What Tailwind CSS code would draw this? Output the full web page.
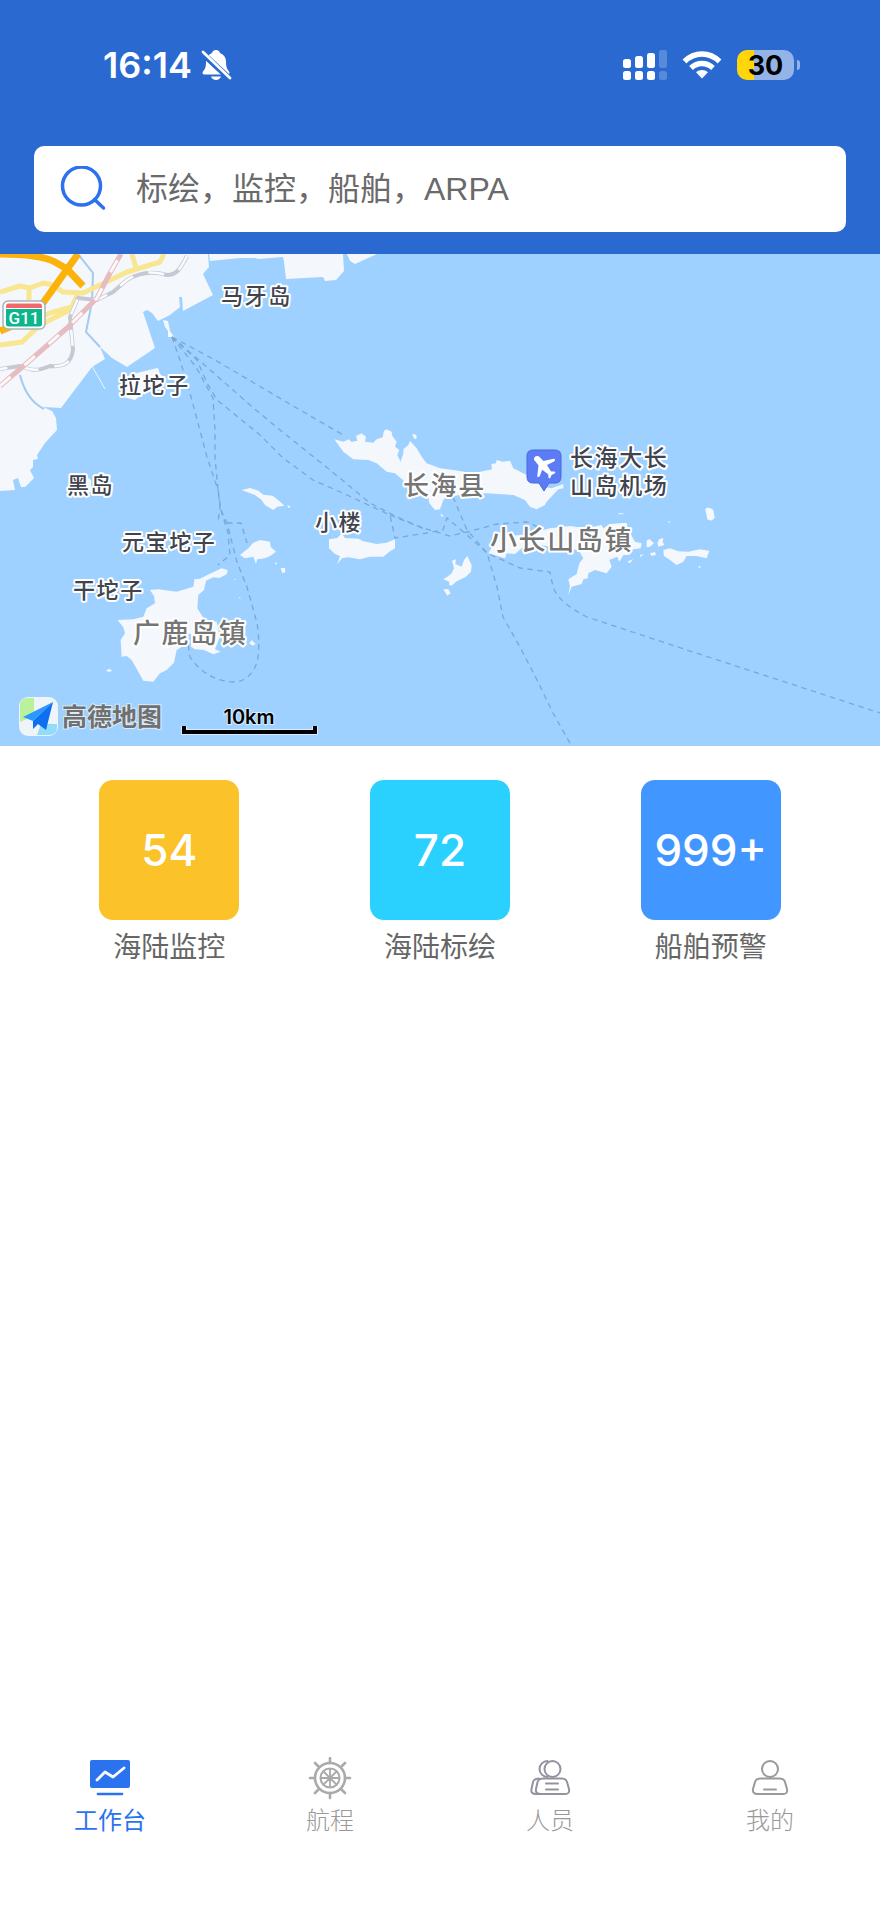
<!DOCTYPE html>
<html lang="zh-CN">
<head>
<meta charset="UTF-8">
<meta name="viewport" content="width=device-width, initial-scale=1">
<title>工作台</title>
<script src="https://cdn.jsdelivr.net/npm/@tailwindcss/browser@4"></script>
</head>
<body class="flex min-h-screen flex-col bg-white font-['Liberation_Sans','Noto_Sans_CJK_SC',sans-serif]">

<header class="bg-[#2a69d0] px-[34px] pb-[22px] pt-[45px]">
  <!-- Status bar -->
  <div class="flex h-10 items-center justify-between pl-[69px] pr-[46px]">
    <div class="flex items-center gap-2 text-white">
      <time class="font-[Inter,sans-serif] text-[36px] font-semibold leading-10">16:14</time>
      <svg class="h-8 w-8" viewBox="0 0 32 32" fill="currentColor" aria-label="静音">
        <path d="M16 1c2 0 3.500 1.200 4 3 4 1.500 6 5 6 9 0 5 1 7 3 9.500 1 1.500.500 3-1.500 3h-23c-2 0-2.500-1.500-1.500-3C5 20 6 18 6 13c0-4 2-7.500 6-9 .500-1.800 2-3 4-3z"/>
        <path d="M11 27.500h10c-.800 2.200-2.600 3.500-5 3.500s-4.200-1.300-5-3.500z"/>
        <path d="M1.500 3.500 30 30" stroke="#2a69d0" stroke-width="6"/>
        <path d="M3 3 30 29" stroke="currentColor" stroke-width="2.800" stroke-linecap="round"/>
      </svg>
    </div>
    <div class="flex items-center gap-[15px]">
      <svg class="h-8 w-11" viewBox="0 0 44 32" fill="#fff" aria-label="信号">
        <rect x="0" y="10" width="8" height="9" rx="2.500"/><rect x="12" y="7" width="8" height="12" rx="2.500"/><rect x="24" y="4" width="8" height="15" rx="2.500"/><rect x="36" y="1" width="8" height="18" rx="2.500" opacity=".22"/>
        <rect x="0" y="22" width="8" height="9" rx="2.500"/><rect x="12" y="22" width="8" height="9" rx="2.500"/><rect x="24" y="22" width="8" height="9" rx="2.500"/><rect x="36" y="22" width="8" height="9" rx="2.500" opacity=".22"/>
      </svg>
      <svg class="h-8 w-10" viewBox="0 0 40 32" fill="none" stroke="#fff" stroke-width="5.500" aria-label="无线网络">
        <path d="M2.500 12.500C12.500 2.500 27.500 2.500 37.500 12.500"/>
        <path d="M9 19c6.500-6 15.500-6 22 0"/>
        <path d="M20 29.500l-6-6.300c3.500-3 8.500-3 12 0z" fill="#fff" stroke="none"/>
      </svg>
      <div class="flex items-center gap-[3px]">
        <div class="flex h-[30px] w-[57px] items-center justify-center rounded-[10px] bg-linear-to-r from-[#ffd60a] from-30% to-[#94b4e8] to-30% font-[Inter,sans-serif] text-[27px] font-bold leading-none text-black">30</div>
        <div class="h-[10px] w-[3px] rounded-r-full bg-[#94b4e8]"></div>
      </div>
    </div>
  </div>

  <!-- Search -->
  <form role="search" class="mt-[61px] flex h-[86px] items-center gap-[30px] rounded-[10px] bg-white pl-[26px] pr-6">
    <label for="q" class="shrink-0">
      <svg class="h-[46px] w-[46px]" viewBox="0 0 46 46" fill="none" stroke="#2b71f0" stroke-width="3.500" stroke-linecap="round" aria-label="搜索">
        <circle cx="21.500" cy="20" r="19"/><path d="M34.500 33.500 43.500 42"/>
      </svg>
    </label>
    <input id="q" type="search" placeholder="标绘，监控，船舶，ARPA" class="h-full min-w-0 flex-1 bg-transparent text-[32px] outline-none placeholder:text-[#6a6a6a]">
  </form>
</header>

<main class="flex-1">
  <!-- Sea chart -->
  <svg class="block h-auto w-full font-['Noto_Sans_CJK_SC',sans-serif]" viewBox="0 254 880 492" role="img" aria-label="长海县海域地图">
    <rect x="0" y="254" width="880" height="492" fill="#9ed1ff"/>
    <!-- Mainland coast -->
    <g fill="#f4f7fc">
      <path d="M0 254H208L209 267 203 274 213 295 183 311 182 297 179 297 180 307 170 315 158 321 152 313 147 310 143 312 155 348 127 367 112 358 100 347 105 359 92 367 61 408 43 407 52 411 56 418 57 430 45 443 37 455 38 459 33 460 33 467 30 470 34 478 25 487 21 487 18 478 13 480 15 490 0 491z"/>
      <path d="M209 254 210 261 240 258 255 258 258 259 283 257 284 262 286 279 323 277 325 281 336 280 344 271 343 254zM347 254 350 261 355 264 377 254z"/>
      <path d="M163 320l5 1 2 10 4 6-6 0 0-6-3-4z"/>
      <path d="M121 388l8-13 24-6 5-1 2 6 7 5-6 10-16 3-10 8-12-3z"/>
      <path d="M78 475l8 1 5 4 0 12-8 2-6-6z"/>
    </g>
    <path d="M20 375c2 8 8 26 24 34M78 254l15 19-1 29-6 30 14 15" fill="none" stroke="#a3cbf2" stroke-width="2"/>
    <path d="M92 366 105 389" stroke="#eef5fc"/>
    <!-- Roads and railways -->
    <g fill="none" stroke-linejoin="round">
      <g stroke="#f8e691" stroke-width="5">
        <path d="M0 292 20 286 30 288 43 283 53 285 63 292 83 293 100 285 127 272 150 265 160 262 164 254M132 254 136 268M29 287V300M78 293 72 307 50 313 38 318M0 345 22 342 40 325 70 310"/>
      </g>
      <g stroke="#fbb30b" stroke-width="7">
        <path d="M0 254C20 254 42 255 55 262L67 269 83 286M78 254 68 268 43 303 22 322 0 331"/>
      </g>
      <path d="M187 256C180 270 176 275 167 275C150 270 138 273 127 280L113 292 97 300 78 298 70 317 73 350C71 364 63 367 50 366C36 372 30 370 20 366L0 369" stroke="#c6c8d4" stroke-width="4"/>
      <path d="M187 256C180 270 176 275 167 275C150 270 138 273 127 280L113 292 97 300 78 298 70 317 73 350C71 364 63 367 50 366C36 372 30 370 20 366L0 369" stroke="#fafbfd" stroke-width="2.500" stroke-dasharray="16 16"/>
      <path d="M0 386 27 363 67 328 97 298 110 273 121 254" stroke="#e6bcc0" stroke-width="5"/>
      <path d="M0 386 27 363 67 328 97 298 110 273 121 254" stroke="#fcf7f8" stroke-width="3" stroke-dasharray="14 18"/>
    </g>
    <!-- Islands -->
    <g fill="#f4f7fc">
      <g transform="translate(280 400) scale(.3333)">
        <path d="M163 118 190 125 207 118 215 126 232 122 228 108 245 100 258 110 255 125 280 128 290 118 308 112 312 92 320 88 335 95 337 108 350 125 345 140 358 150 352 165 362 185 370 160 370 148 385 135 390 122 410 145 425 170 440 190 480 205 520 210 580 220 636 208 634 192 648 190 650 180 668 185 690 182 700 205 740 225 790 260 815 265 850 252 850 265 835 268 800 305 795 315 770 328 750 320 735 300 700 285 620 280 540 285 500 290 490 300 480 328 465 330 448 310 445 290 410 275 375 245 345 220 320 215 290 190 265 180 220 178 190 155z"/>
        <path d="M396 102 408 104 411 114 404 118zM481 340 492 348 485 350z"/>
        <path d="M147 418 172 414 185 400 195 414 235 416 250 424 290 432 320 428 345 418 345 445 328 455 310 470 270 470 240 478 205 472 187 474 172 492 180 468 165 462 147 445z"/>
        <path d="M516 482 528 478 526 492 545 500 552 480 562 468 575 495 573 515 558 530 528 545 515 557 507 555 508 545 490 538 502 530 515 520 522 505zM490 568 505 567 512 580 502 587z"/>
      </g>
      <g transform="translate(0 490) scale(.3333)">
        <path d="M725 0 750-6 775 2 790 14 818 17 838 33 853 47 832 50 820 60 795 45 785 30 765 15zM862 45 873 50 865 54z"/>
        <path d="M720 195 745 175 760 158 780 150 810 155 812 170 828 185 812 197 795 205 772 208 768 222 760 200 735 205zM842 235 855 233 856 246 847 250zM825 215 832 220 828 226zM755 450 767 462 758 467 748 460z"/>
        <path d="M450 300 475 298 530 305 580 290 583 268 600 266 622 255 665 235 683 240 680 253 658 264 640 262 618 272 612 300 595 315 592 355 605 375 615 390 650 395 660 440 645 478 662 485 640 493 612 480 585 478 573 470 575 435 565 430 555 465 530 480 522 518 500 540 480 550 460 575 430 572 415 545 395 510 380 498 365 500 362 450 375 430 370 412 353 390 400 388 430 380 440 355 465 340 462 318z"/>
        <path d="M318 542l9-6 10 6-10 4zM703 265l5 4-4 2zM716 322h5v5z"/>
      </g>
      <g transform="translate(520 420) scale(.3333)">
        <path d="M-65 350 0 345 50 335 90 325 150 318 200 325 245 315 250 325 270 312 320 308 325 330 345 365 365 370 362 385 330 390 325 405 310 405 298 425 292 410 268 420 275 440 260 460 225 450 205 460 203 475 190 478 185 492 155 500 145 525 150 498 145 478 170 462 178 430 190 415 175 390 120 385 60 375 5 385-15 402-40 400-45 415-95 400-80 375z"/>
        <path d="M380 362 388 357 402 370 390 380 380 382zM412 368 418 358 430 354 428 365 433 375 415 380zM390 400 405 396 408 405 395 408zM360 405 370 402 362 412zM322 425 340 417 330 430zM295 280h15v3h-15zM443 303l10 3-6 2zM536 438h5v5h-5z"/>
        <path d="M430 390 450 385 475 394 505 395 540 388 568 392 560 415 530 408 500 408 490 425 470 435 450 420 432 408z"/>
        <path d="M556 267C562 260 575 265 580 270L584 292C582 302 568 304 562 298z"/>
      </g>
    </g>
    <!-- Ferry routes -->
    <g fill="none" stroke="#7ba7d4" stroke-width="1.300" stroke-dasharray="5.500 4.500">
      <path d="M172 337 215 360 300 410 345 436"/>
      <path d="M172 337 200 361 250 405 280 430 330 470 370 503 397 517 423 528 450 536 467 532 497 524 527 522 538 527"/>
      <path d="M172 337 197 360 207 383 217 400 260 435 283 458 313 480 347 495 390 515 395 538 427 533 443 530 447 518 467 535 487 553 497 587 503 617 520 647 537 680 553 713 571 745"/>
      <path d="M390 515 427 530"/>
      <path d="M172 337 196 367 213 398 215 430 215 457 218 490 220 507 218 522"/>
      <path d="M172 337 180 360 190 393 207 457 218 490 221 510 228 533 230 555 218 565"/>
      <path d="M221 510 227 523 237 562 247 587 257 623C261 650 258 665 252 672C246 680 240 682 233 682C215 681 200 672 190 657L188 643"/>
      <path d="M227 523 241 523 247 543"/>
      <path d="M453 497 467 530 487 553 520 568 550 572 553 587C558 600 570 608 587 617L687 650 880 713"/>
    </g>
    <!-- Highway shield -->
    <rect x="3" y="301" width="42" height="28" rx="5" fill="#fff" stroke="#a9b3ba" stroke-width="1.500"/>
    <path d="M6 308V306Q6 303.500 8.500 303.500H39.500Q42 303.500 42 306V308z" fill="#f2696b"/>
    <path d="M6 309H42V324Q42 326.500 39.500 326.500H8.500Q6 326.500 6 324z" fill="#0db58c"/>
    <text x="24" y="324" text-anchor="middle" fill="#fff" class="font-[Roboto,sans-serif] text-[17px] font-medium">G11</text>
    <!-- Airport pin -->
    <path d="M533 450h22q6 0 6 6v21q0 6-6 6h-6l-5 8-5-8h-6q-6 0-6-6v-21q0-6 6-6z" fill="#5b7cf5" stroke="#4a69df"/>
    <path d="M534 459c0-3 4-4 6-1.500l3.500 3.500 10-2.200c2 0 2 2 .500 2.700l-7 3.500 4 6.500 3.500 0c1.300.500 1 1.500 0 2l-3 1.500-1 2.500c-.600 1.300-2 1-2-.300l-.300-3-6-4.500-2.500 6.500c-1 1.300-2.700.800-2.400-.800l1.200-9.900-3-4c-.900-.800-1.500-1.500-1.500-2.500z" fill="#fff"/>
    <!-- Place names -->
    <g stroke="#fff" stroke-width="4" stroke-linejoin="round" class="font-medium tracking-widest [paint-order:stroke]">
      <g fill="#3f444e" class="text-[22px]">
        <text x="221" y="304">马牙岛</text>
        <text x="119" y="393">拉坨子</text>
        <text x="67" y="493">黑岛</text>
        <text x="122" y="550">元宝坨子</text>
        <text x="315" y="530">小楼</text>
        <text x="73" y="598">干坨子</text>
        <text class="text-[23px]"><tspan x="570" y="466">长海大长</tspan><tspan x="570" y="494">山岛机场</tspan></text>
      </g>
      <g fill="#757575" class="text-[27px]">
        <text x="403" y="495" class="text-[26px]">长海县</text>
        <text x="490" y="550">小长山岛镇</text>
        <text x="133" y="643">广鹿岛镇</text>
      </g>
    </g>
    <!-- Map provider -->
    <rect x="19" y="697" width="39" height="39" rx="9" fill="#eef4f8"/>
    <path d="M28 698H34V716L20 722V706Q20 698 28 698z" fill="#b9f29b"/>
    <path d="M37 735 41 724H57V727Q57 735 49 735z" fill="#8fdcfb"/>
    <path d="M53 702 23 717 33 721z" fill="#2a98ff"/><path d="M53 702 33 721V729L38 724 46 730z" fill="#0f6ff2"/>
    <text x="62" y="726" fill="#707070" stroke="#dcebf8" stroke-width="2" class="text-[25px] font-bold [paint-order:stroke]">高德地图</text>
    <!-- Scale -->
    <text x="249" y="724" text-anchor="middle" fill="#000" stroke="#d8ecff" stroke-width="2" class="font-[Inter,sans-serif] text-[20px] font-semibold [paint-order:stroke]">10km</text>
    <path d="M184 726V732H315V726" fill="none" stroke="#d8ecff" stroke-width="6"/>
    <path d="M184 726V732H315V726" fill="none" stroke="#000" stroke-width="4"/>
  </svg>

  <!-- Counters -->
  <section class="grid grid-cols-3 px-[34px] pt-[34px] text-[28px] leading-9 text-[#666]">
    <a href="#monitor" class="flex flex-col items-center gap-[10px]"><span class="flex size-[140px] items-center justify-center rounded-[14px] bg-[#fbc229] font-[Inter,sans-serif] text-[44px] font-medium text-white">54</span>海陆监控</a>
    <a href="#plot" class="flex flex-col items-center gap-[10px]"><span class="flex size-[140px] items-center justify-center rounded-[14px] bg-[#2ad1ff] font-[Inter,sans-serif] text-[44px] font-medium text-white">72</span>海陆标绘</a>
    <a href="#alerts" class="flex flex-col items-center gap-[10px]"><span class="flex size-[140px] items-center justify-center rounded-[14px] bg-[#4197ff] font-[Inter,sans-serif] text-[44px] font-medium text-white">999+</span>船舶预警</a>
  </section>
</main>

<!-- Tab bar -->
<nav class="grid grid-cols-4 pb-[76px] text-2xl font-light leading-8 text-[#999]">
  <a href="#workbench" aria-current="page" class="flex flex-col items-center gap-1 text-[#2b73ee]">
    <svg class="size-11" viewBox="0 0 44 44" fill="none"><rect x="2" y="3" width="40" height="28" rx="2" fill="currentColor"/><path d="M9 23l8-8 8 5 11-9" stroke="#fff" stroke-width="2.800" stroke-linecap="round" stroke-linejoin="round"/><path d="M10 37h24" stroke="currentColor" stroke-width="2.600" stroke-linecap="round"/></svg>
    <span class="font-normal">工作台</span>
  </a>
  <a href="#voyage" class="flex flex-col items-center gap-1">
    <svg class="size-11" viewBox="0 0 44 44" fill="none" stroke="#aaa" stroke-width="2.600" stroke-linecap="round"><circle cx="22" cy="21" r="15"/><circle cx="22" cy="21" r="9.500" stroke-width="2"/><path d="M22 1v5M22 36v5M2 21h5M37 21h5M7 6l4 4M33 32l4 4M37 6l-4 4M11 32l-4 4"/><path d="M22 12v18M13 21h18M15.500 14.500l13 13M28.500 14.500l-13 13" stroke-width="1.800"/><circle cx="22" cy="21" r="2" fill="#aaa" stroke="none"/></svg>
    航程
  </a>
  <a href="#crew" class="flex flex-col items-center gap-1">
    <svg class="size-11" viewBox="0 0 44 44" fill="none" stroke="#93939f" stroke-width="2" stroke-linecap="round" stroke-linejoin="round"><circle cx="24.500" cy="12" r="8"/><path d="M19.500 4a8 8 0 1 0 0 16"/><path d="M15 21.500H34Q38 21.500 39 25L41 32Q42 37 37 37H13Q7 37 8 32L9.500 25Q10.500 21.500 15 21.500z"/><path d="M11 21.500Q6 21.500 5 25L3.500 32Q2.500 37 8 37H13M18 26.500h12M18 32.500h12"/></svg>
    人员
  </a>
  <a href="#me" class="flex flex-col items-center gap-1">
    <svg class="size-11" viewBox="0 0 44 44" fill="none" stroke="#999" stroke-width="2" stroke-linecap="round" stroke-linejoin="round"><circle cx="22" cy="12" r="8"/><path d="M12 21.500H32Q36 21.500 37 25L39 32Q40 37 35 37H10Q4 37 5 32L7 25Q8 21.500 12 21.500z"/><path d="M16 32.500h12"/></svg>
    我的
  </a>
</nav>
</body>
</html>
